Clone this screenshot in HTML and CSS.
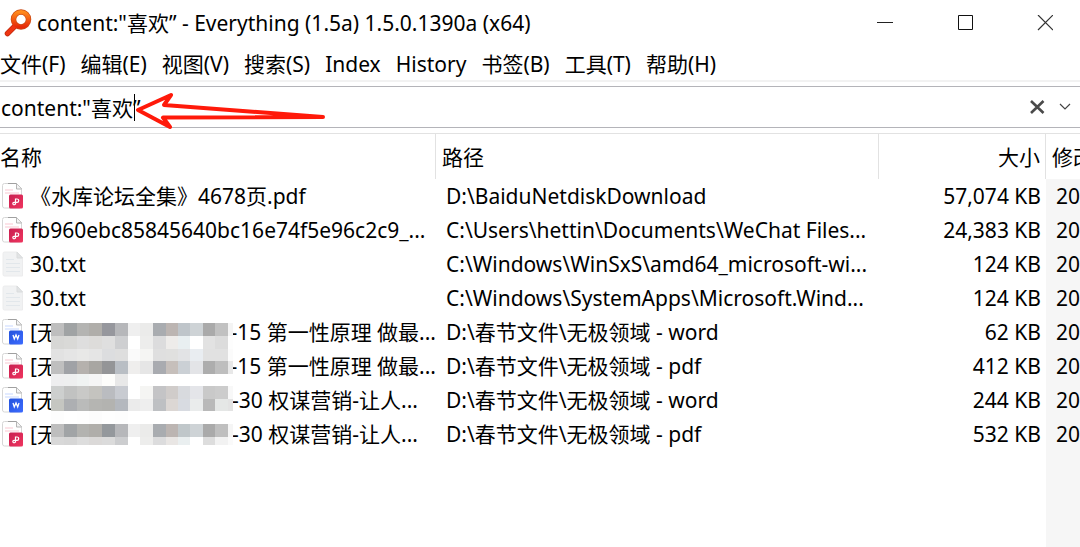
FILE: index.html
```
<!DOCTYPE html>
<html lang="zh-CN">
<head>
<meta charset="utf-8">
<title>content:"喜欢” - Everything (1.5a) 1.5.0.1390a (x64)</title>
<link rel="stylesheet" href="styles.css">
</head>
<body>
<svg class="defs" aria-hidden="true">
  <defs>
    <linearGradient id="lens" x1="0" y1="0" x2="0" y2="1"><stop offset="0" stop-color="#ff8a1c"/><stop offset="1" stop-color="#e62a08"/></linearGradient>
    <linearGradient id="red" x1="0" y1="0" x2="1" y2="1"><stop offset="0" stop-color="#c81f50"/><stop offset="1" stop-color="#f0355f"/></linearGradient>
    <linearGradient id="blue" x1="0" y1="0" x2="1" y2="1"><stop offset="0" stop-color="#2453dc"/><stop offset="1" stop-color="#3c6bff"/></linearGradient>
    <symbol id="sheet" viewBox="0 0 22 26">
      <path d="M2.5.5h12l5 5.500v17q0 2-2 2h-15q-2 0-2-2v-20.500q0-2 2-2z" fill="#fff" stroke="#d6d6d6"/>
      <path d="M6 .5h8.500l5 5.500" fill="none" stroke="#a0a0a0"/>
      <path d="M14.500.5v5.500h5" fill="#f4f4f4" stroke="#b5b5b5"/>
    </symbol>
    <symbol id="pdf" viewBox="0 0 22 26">
      <use href="#sheet"/>
      <path d="M3 7h8M3 10h14" stroke="#fce3e8" stroke-width="2"/>
      <rect x="7" y="11.500" width="14" height="14" rx="1.500" fill="url(#red)"/>
      <path d="M13.500 21.500v-5.500h1.500a1.700 1.700 0 0 1 0 3.400h-3a1.200 1.200 0 0 0 0 2.400q1.500 0 1.500-1.500" fill="none" stroke="#fff" stroke-width="1.200"/>
    </symbol>
    <symbol id="word" viewBox="0 0 22 26">
      <use href="#sheet"/>
      <path d="M3 7h8M3 10h14" stroke="#e3ebff" stroke-width="2"/>
      <rect x="7" y="11.500" width="14" height="14" rx="1.500" fill="url(#blue)"/>
      <path d="M11 16l1.300 4 1.700-4 1.700 4 1.300-4" fill="none" stroke="#fff" stroke-width="1.300"/>
    </symbol>
    <symbol id="txt" viewBox="0 0 22 26">
      <path d="M2.500 1h12.500l5.500 6v18h-18q-1.500 0-1.500-1.500v-21q0-1.500 1.500-1.500z" fill="#f1f2f3" stroke="#ececed"/>
      <path d="M15 1v6h5.500z" fill="#e2e4e5" stroke="#dadcdd"/>
      <path d="M4 8.500h8M4 12.500h14M4 16.500h14M4 20.500h14" stroke="#e2e7eb"/>
    </symbol>
  </defs>
</svg>

<header class="titlebar">
  <svg class="app-icon" viewBox="0 0 28 28" aria-hidden="true">
    <path d="M3.500 24.500l8-8" stroke="#c02a0c" stroke-width="5.500" stroke-linecap="round"/>
    <circle cx="17" cy="10.500" r="7.500" fill="none" stroke="#c94a14" stroke-width="5.500"/>
    <path d="M3.500 24.500l8-8" stroke="#ee3512" stroke-width="4" stroke-linecap="round"/>
    <circle cx="17" cy="10.500" r="7.500" fill="none" stroke="url(#lens)" stroke-width="4.200"/>
  </svg>
  <h1 class="title">content:"喜欢” - Everything (1.5a) 1.5.0.1390a (x64)</h1>
  <div class="window-buttons">
    <button class="window-button" aria-label="最小化"><svg class="glyph" viewBox="0 0 16 16"><path d="M0 7.500h16" stroke="#222"/></svg></button>
    <button class="window-button" aria-label="最大化"><svg class="glyph" viewBox="0 0 16 16"><path d="M1.500.5h14v14h-14z" fill="none" stroke="#111"/></svg></button>
    <button class="window-button" aria-label="关闭"><svg class="glyph" viewBox="0 0 16 16"><path d="M1 0l15 15M16 0l-15 15" stroke="#333" stroke-width="1.200"/></svg></button>
  </div>
</header>

<nav class="menu">
  <button class="menu-item">文件(F)</button>
  <button class="menu-item">编辑(E)</button>
  <button class="menu-item">视图(V)</button>
  <button class="menu-item">搜索(S)</button>
  <button class="menu-item">Index</button>
  <button class="menu-item">History</button>
  <button class="menu-item">书签(B)</button>
  <button class="menu-item">工具(T)</button>
  <button class="menu-item">帮助(H)</button>
</nav>

<div class="search">
  <input class="search-input" type="text" aria-label="搜索" value="content:&quot;喜欢”">
  <button class="search-button" aria-label="清除"><svg class="glyph" viewBox="0 0 16 16"><path d="M1 2l12.500 12M13.500 2l-12.500 12" stroke="#4a4a4a" stroke-width="2.600"/></svg></button>
  <button class="search-button" aria-label="历史"><svg class="glyph" viewBox="0 0 16 16"><path d="M2 5l5 5 5-5" fill="none" stroke="#444" stroke-width="1.200"/></svg></button>
  <span class="caret"></span>
  <svg class="arrow" viewBox="0 0 192 40" aria-hidden="true"><path d="M189 27L30 15L37 5L4 20L36 37L29 27.500Z" fill="#fff" stroke="#ff1a0a" stroke-width="4" stroke-linejoin="round"/></svg>
</div>

<main class="results">
  <table class="files">
    <colgroup><col class="col-name"><col class="col-path"><col class="col-size"><col class="col-date"></colgroup>
    <thead><tr><th class="head-name">名称</th><th>路径</th><th class="head-size">大小</th><th>修改</th></tr></thead>
    <tbody>
      <tr><td><div class="file"><svg class="file-icon"><use href="#pdf"/></svg><span>《水库论坛全集》4678页.pdf</span></div></td><td class="path">D:\BaiduNetdiskDownload</td><td class="size">57,074 KB</td><td class="date">20</td></tr>
      <tr><td><div class="file"><svg class="file-icon"><use href="#pdf"/></svg><span>fb960ebc85845640bc16e74f5e96c2c9_...</span></div></td><td class="path">C:\Users\hettin\Documents\WeChat Files...</td><td class="size">24,383 KB</td><td class="date">20</td></tr>
      <tr><td><div class="file"><svg class="file-icon"><use href="#txt"/></svg><span>30.txt</span></div></td><td class="path">C:\Windows\WinSxS\amd64_microsoft-wi...</td><td class="size">124 KB</td><td class="date">20</td></tr>
      <tr><td><div class="file"><svg class="file-icon"><use href="#txt"/></svg><span>30.txt</span></div></td><td class="path">C:\Windows\SystemApps\Microsoft.Wind...</td><td class="size">124 KB</td><td class="date">20</td></tr>
      <tr><td><div class="file"><svg class="file-icon"><use href="#word"/></svg><span class="masked">[无</span><span>-15 第一性原理 做最...</span></div></td><td class="path">D:\春节文件\无极领域 - word</td><td class="size">62 KB</td><td class="date">20</td></tr>
      <tr><td><div class="file"><svg class="file-icon"><use href="#pdf"/></svg><span class="masked">[无</span><span>-15 第一性原理 做最...</span></div></td><td class="path">D:\春节文件\无极领域 - pdf</td><td class="size">412 KB</td><td class="date">20</td></tr>
      <tr><td><div class="file"><svg class="file-icon"><use href="#word"/></svg><span class="masked">[无</span><span>-30 权谋营销-让人...</span></div></td><td class="path">D:\春节文件\无极领域 - word</td><td class="size">244 KB</td><td class="date">20</td></tr>
      <tr><td><div class="file"><svg class="file-icon"><use href="#pdf"/></svg><span class="masked">[无</span><span>-30 权谋营销-让人...</span></div></td><td class="path">D:\春节文件\无极领域 - pdf</td><td class="size">532 KB</td><td class="date">20</td></tr>
    </tbody>
  </table>
  <svg class="mosaic" id="mosaic" viewBox="0 0 182 122" shape-rendering="crispEdges" aria-hidden="true"></svg>
</main>
<script src="mosaic.js"></script>
</body>
</html>
```
FILE: styles.css
```
* { box-sizing: border-box; }
body {
  margin: 0;
  min-height: 100vh;
  display: flex;
  flex-direction: column;
  overflow: hidden;
  background: #fff;
  color: #000;
  font-family: "Noto Sans", "Noto Sans CJK SC", sans-serif;
  font-size: 21px;
  line-height: 30px;
  white-space: nowrap;
}
button, input { font: inherit; color: inherit; background: none; border: 0; padding: 0; margin: 0; }
.defs { position: absolute; width: 0; height: 0; }
.titlebar { display: flex; align-items: center; height: 46px; gap: 5px; padding-left: 4px; }
.app-icon { width: 28px; height: 28px; flex: none; }
.title { margin: 0; flex: 1; font-size: 21px; font-weight: 400; }
.window-buttons { display: flex; gap: 10px; }
.window-button { width: 70px; height: 46px; display: flex; align-items: center; justify-content: center; }
.glyph { width: 16px; height: 16px; display: block; }
.menu { display: flex; gap: 15px; height: 36px; padding-top: 2px; align-items: center; border-bottom: 2px solid #f2f2f2; }
.search {
  position: relative;
  display: flex;
  align-items: center;
  height: 42px;
  margin: 4px 0 5px;
  border-top: 1px solid #b4b4b9;
  border-bottom: 1px solid #b4b4b9;
}
.search-input { flex: 1; min-width: 0; height: 36px; padding-left: 1px; outline: 0; }
.search-button { width: 28px; height: 36px; display: flex; align-items: center; justify-content: center; }
.caret { position: absolute; left: 134px; top: 7px; width: 1px; height: 27px; background: #000; }
.arrow { position: absolute; left: 134px; top: 3px; width: 192px; height: 40px; }
.results {
  position: relative;
  flex: 1;
  border-top: 1px solid #e2e2e2;
  background: linear-gradient(#f6f6f6, #f6f6f6) right / 34px 100% no-repeat;
}
.files { width: 100%; table-layout: fixed; border-collapse: separate; border-spacing: 0; }
.col-name { width: 436px; }
.col-size { width: 167px; }
.col-date { width: 34px; }
th { height: 45px; padding: 0 5px 0 6px; font-weight: 400; text-align: left; background: #fff; border-right: 1px solid #e2e2e2; }
th:last-child { border-right: 0; }
.head-name { padding-left: 0; }
.head-size { text-align: right; }
td { height: 34px; padding: 0; }
.file { display: flex; align-items: center; padding-left: 2px; gap: 6px; }
.file-icon { width: 22px; height: 26px; flex: none; }
.masked { width: 196px; }
.path { padding-left: 10px; }
.size { padding-right: 5px; text-align: right; }
.date { padding-left: 10px; }
.mosaic { position: absolute; left: 51px; top: 189px; width: 182px; height: 122px; }
```
FILE: mosaic.js
```
const columns = [0, 13, 26, 38, 51, 64, 77, 89, 102, 115, 127, 139, 152, 164, 177, 182];
const rows = [0, 13, 26, 38, 51, 63, 76, 88, 101, 114, 122];
const shades = [
  "bebebe a0a3a4 b4b4b2 b0aeaa 96979d b6b7ba efefef ebebea a9acb0 bcb5b2 bfc5ca ced3d6 aaaaaa c1c1c1 f4f4f4",
  "d7d7d5 d9d9d7 dedede dddcda dfdfdf cecfd1 ffffff ededec dcdcdd eeecea e9eff1 ffffff e2e2e2 dcdcdc fdfdfd",
  "e2e2e2 e5e5e5 e8e8e7 e5e5e5 dcdddf dedede fafafa f5f5f3 dfdfdf e0e0df e2e3e5 e9edf1 e1e1e1 e1e1e1 fbfbfb",
  "bfbfbf a0a2a6 b5b1ad a8a6a2 949597 b9bec4 efeeed e6e6e6 a9abb0 c6bfbb cbd0d5 e3e4e7 adadad bebebe e8e8e8",
  "eeeeef eeefef f0f3f2 f5f5f5 fdfdfb e8e8e8 ffffff ffffff ffffff ffffff ffffff ffffff ffffff ffffff ffffff",
  "cdcfce c1c2c1 c9c9c7 c4c3bf babcc0 c8cbd1 ffffff f5f5f3 c4c4c6 d0ccca d8dade e4e5e9 c9c9c9 cccccc f8f8f8",
  "c5c6c1 adafb2 babbba b5b5b2 b3b3b0 b4b8be ebebeb eeeeee bec0c3 dcd7d4 d8dbe1 eaecec b9b9b9 e5e7e6 e3e3e3",
  "fdfdfd ffffff fefefe fcfcfc fefefe fdfdfd ffffff ffffff ffffff ffffff ffffff ffffff ffffff ffffff ffffff",
  "bebebe a1a4a6 b3b3b0 b0aeaa 94989c b6b7ba efefef ebebea a9acb0 bcb5b2 c0c7ca ced3d6 aaaaaa bfbfbf f5f5f5",
  "d8d8d8 d6d6d6 dddddd dbd9d8 dbdbdb cccdcf ffffff ededec dcdcdd e9e6e4 eaeff0 ffffff dddddd f2f2f2 fafafa"
];
const mosaic = document.getElementById("mosaic");
shades.forEach((line, r) => line.split(" ").forEach((shade, c) => {
  const tile = document.createElementNS("http://www.w3.org/2000/svg", "rect");
  tile.setAttribute("x", columns[c]);
  tile.setAttribute("y", rows[r]);
  tile.setAttribute("width", columns[c + 1] - columns[c]);
  tile.setAttribute("height", rows[r + 1] - rows[r]);
  tile.setAttribute("fill", "#" + shade);
  mosaic.appendChild(tile);
}));
```
